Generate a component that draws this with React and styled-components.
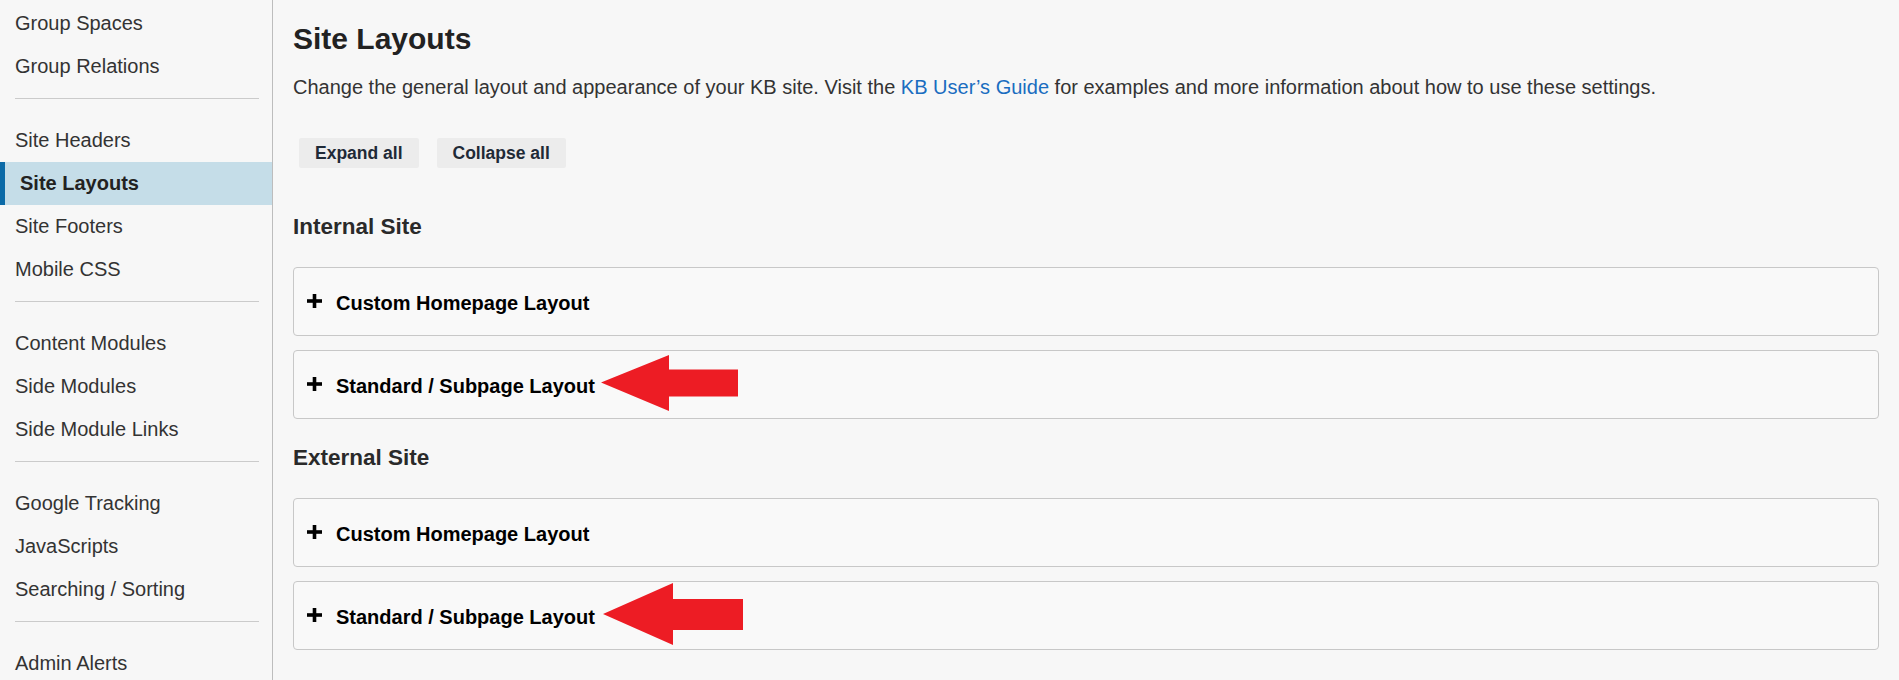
import React from "react";
import styled, { createGlobalStyle, css } from "styled-components";

const GlobalStyle = createGlobalStyle`
  html, body {
    margin: 0;
    padding: 0;
    background: #f7f7f7;
  }
  body {
    font-family: "Liberation Sans", Arial, sans-serif;
    color: #333;
  }
  * { box-sizing: border-box; }
`;

const Page = styled.div`
  display: flex;
  min-height: 100vh;
  background: #f7f7f7;
  overflow: hidden;
`;

const Sidebar = styled.nav`
  width: 273px;
  flex-shrink: 0;
  border-right: 1px solid #bdbdbd;
  padding-top: 2px;
`;

const NavItem = styled.a`
  display: block;
  height: 43px;
  line-height: 43px;
  padding-left: 15px;
  font-size: 20px;
  color: #333;
  text-decoration: none;
  white-space: nowrap;
  ${(p) =>
    p.$active &&
    css`
      background: #c5dde8;
      border-left: 5px solid #0b6aa7;
      font-weight: bold;
      color: #222;
    `}
`;

const NavDivider = styled.hr`
  border: 0;
  height: 1px;
  background: #cbcbcb;
  margin: 10px 13px 20px 15px;
`;

const Main = styled.main`
  flex: 1;
  min-width: 0;
  padding: 21px 20px 0 20px;
`;

const Title = styled.h1`
  margin: 0;
  font-size: 30px;
  line-height: 36px;
  font-weight: bold;
  color: #222;
`;

const Intro = styled.p`
  margin: 18px 0 0;
  font-size: 20px;
  line-height: 24px;
  color: #333;
`;

const Link = styled.a`
  color: #1a6dc0;
  text-decoration: none;
`;

const Toolbar = styled.div`
  display: flex;
  gap: 18px;
  margin: 39px 0 45px;
  padding-left: 6px;
`;

const ToolButton = styled.button`
  height: 30px;
  padding: 0 16px;
  border: none;
  border-radius: 2px;
  background: #ececec;
  font-family: "Liberation Sans", Arial, sans-serif;
  font-size: 17.5px;
  font-weight: bold;
  color: #1f2a37;
  cursor: pointer;
`;

const SectionTitle = styled.h2`
  margin: 25px 0 27px;
  font-size: 22.5px;
  line-height: 27px;
  font-weight: bold;
  color: #2a2a2a;
`;

const PanelList = styled.div`
  display: flex;
  flex-direction: column;
  gap: 14px;
`;

const Panel = styled.div`
  height: 69px;
  display: flex;
  align-items: center;
  padding: 2px 0 0 13px;
  border: 1px solid #c8c8c8;
  border-radius: 4px;
  background: #f9f9f9;
`;

const PlusIcon = styled.svg`
  flex-shrink: 0;
  margin: 0 14px 4px 0;
`;

const PanelTitle = styled.span`
  position: relative;
  font-size: 20px;
  line-height: 24px;
  font-weight: bold;
  color: #000;
  white-space: nowrap;
`;

const Arrow = styled.svg`
  position: absolute;
  left: calc(100% + ${(p) => p.$gap}px);
  top: calc(50% - 3px);
  transform: translateY(-50%);
`;

const Plus = () => (
  <PlusIcon width="15" height="14" viewBox="0 0 15 14">
    <rect x="0" y="5.2" width="15" height="3.6" fill="#000" />
    <rect x="5.7" y="0" width="3.6" height="14" fill="#000" />
  </PlusIcon>
);

const arrows = {
  small: { w: 137, h: 56, gap: 6, pts: "0,27.5 68,0 68,14.5 137,14.5 137,41.5 68,41.5 68,56" },
  large: { w: 140, h: 62, gap: 8, pts: "0,31 70,0 70,16 140,16 140,47 70,47 70,62" },
};

const PointerArrow = ({ size }) => {
  const a = arrows[size];
  return (
    <Arrow $gap={a.gap} width={a.w} height={a.h} viewBox={`0 0 ${a.w} ${a.h}`}>
      <polygon points={a.pts} fill="#ed1c24" />
    </Arrow>
  );
};

const navGroups = [
  ["Group Spaces", "Group Relations"],
  ["Site Headers", "Site Layouts", "Site Footers", "Mobile CSS"],
  ["Content Modules", "Side Modules", "Side Module Links"],
  ["Google Tracking", "JavaScripts", "Searching / Sorting"],
  ["Admin Alerts"],
];

const sections = [
  { title: "Internal Site", arrow: "small" },
  { title: "External Site", arrow: "large" },
];

export default function App() {
  return (
    <>
      <GlobalStyle />
      <Page>
        <Sidebar>
          {navGroups.map((group, gi) => (
            <React.Fragment key={gi}>
              {gi > 0 && <NavDivider />}
              {group.map((item) => (
                <NavItem key={item} href="#" $active={item === "Site Layouts"}>
                  {item}
                </NavItem>
              ))}
            </React.Fragment>
          ))}
        </Sidebar>
        <Main>
          <Title>Site Layouts</Title>
          <Intro>
            Change the general layout and appearance of your KB site. Visit the{" "}
            <Link href="#">KB User’s Guide</Link> for examples and more information about how to
            use these settings.
          </Intro>
          <Toolbar>
            <ToolButton>Expand all</ToolButton>
            <ToolButton>Collapse all</ToolButton>
          </Toolbar>
          {sections.map((s) => (
            <React.Fragment key={s.title}>
              <SectionTitle>{s.title}</SectionTitle>
              <PanelList>
                <Panel>
                  <Plus />
                  <PanelTitle>Custom Homepage Layout</PanelTitle>
                </Panel>
                <Panel>
                  <Plus />
                  <PanelTitle>
                    Standard / Subpage Layout
                    <PointerArrow size={s.arrow} />
                  </PanelTitle>
                </Panel>
              </PanelList>
            </React.Fragment>
          ))}
        </Main>
      </Page>
    </>
  );
}
